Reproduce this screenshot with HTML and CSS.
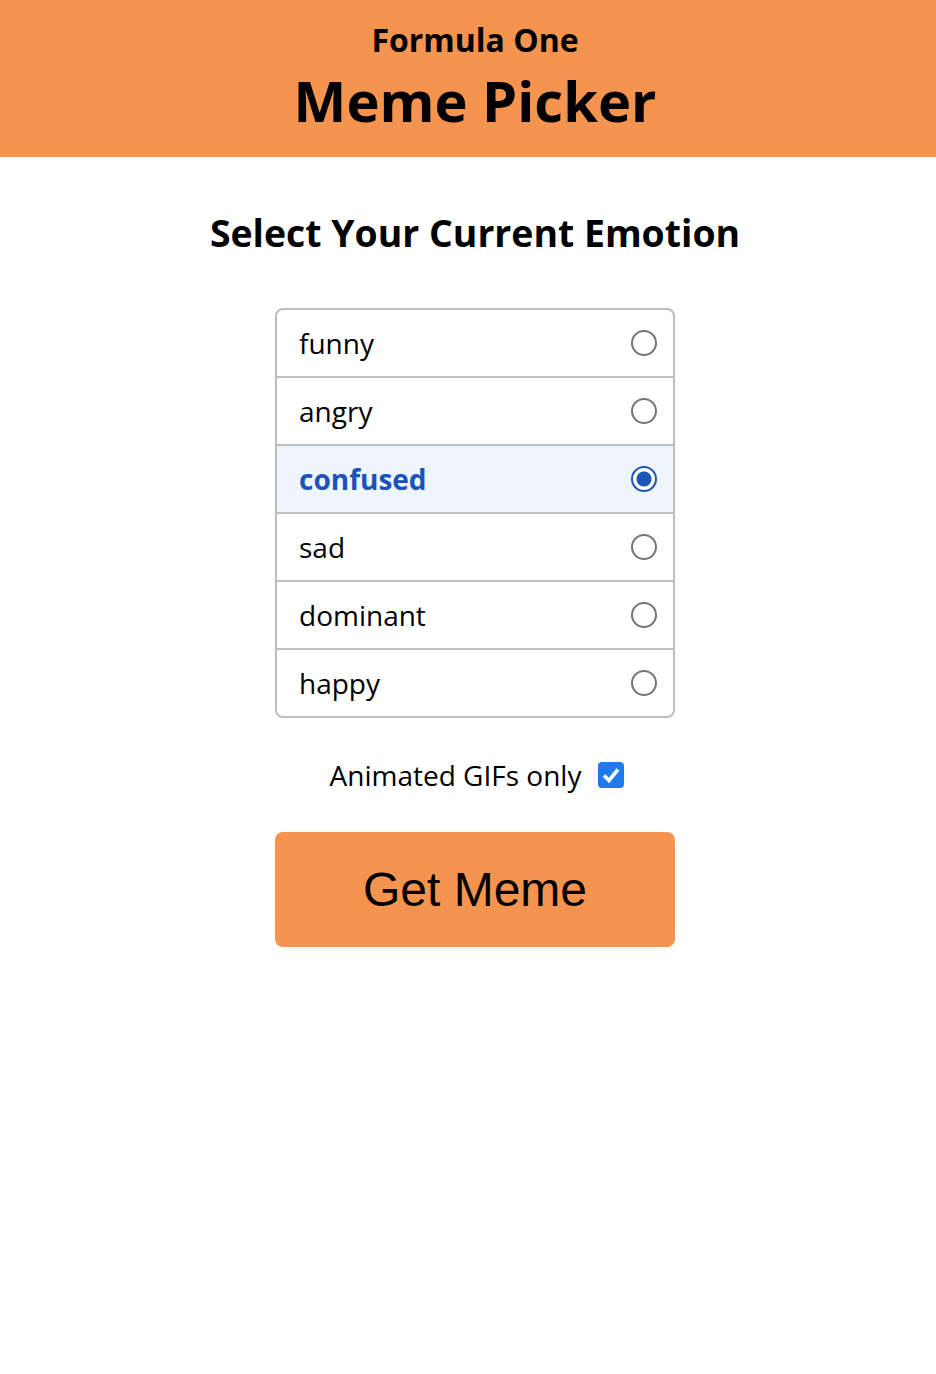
FILE: index.html
```html
<!DOCTYPE html>
<html lang="en">
<head>
<meta charset="utf-8">
<title>Meme Picker</title>
<link rel="stylesheet" href="styles.css">
</head>
<body>
<header class="header">
  <h3 class="header-sub">Formula One</h3>
  <h1 class="header-title">Meme Picker</h1>
</header>
<main class="main">
  <h2 class="prompt">Select Your Current Emotion</h2>
  <div class="emotions">
    <label class="emotion"><span>funny</span><input type="radio" name="emotion" value="funny"></label>
    <label class="emotion"><span>angry</span><input type="radio" name="emotion" value="angry"></label>
    <label class="emotion emotion-selected"><span>confused</span><input type="radio" name="emotion" value="confused" checked></label>
    <label class="emotion"><span>sad</span><input type="radio" name="emotion" value="sad"></label>
    <label class="emotion"><span>dominant</span><input type="radio" name="emotion" value="dominant"></label>
    <label class="emotion"><span>happy</span><input type="radio" name="emotion" value="happy"></label>
  </div>
  <label class="gif-option"><span>Animated GIFs only</span><input type="checkbox" class="gif-check" checked></label>
  <button class="get-btn">Get Meme</button>
</main>
</body>
</html>
```
FILE: styles.css
```css
* { box-sizing: border-box; }
body {
  margin: 0;
  font-family: "Open Sans", "Noto Sans", sans-serif;
  color: #000;
  background: #fff;
}
.header {
  background: #f4944e;
  height: 157px;
  display: flex;
  flex-direction: column;
  align-items: center;
  padding: 18px 0 0 14px;
}
.header-sub {
  margin: 0;
  font-size: 32px;
  font-weight: 700;
  line-height: 44px;
}
.header-title {
  margin: 0;
  font-size: 56px;
  font-weight: 700;
  line-height: 76px;
}
.main {
  display: flex;
  flex-direction: column;
  align-items: center;
  padding-left: 14px;
}
.prompt {
  margin: 50px 0 49px;
  font-size: 37.4px;
  font-weight: 700;
  line-height: 52px;
}
.emotions {
  width: 400px;
  border: 2px solid #bdbdbd;
  border-radius: 8px;
  overflow: hidden;
}
.emotion {
  display: flex;
  align-items: center;
  justify-content: space-between;
  height: 68px;
  padding: 0 16px 0 22px;
  font-size: 28px;
  border-bottom: 2px solid #bdbdbd;
}
.emotion:last-child { border-bottom: none; height: 66px; }
.emotion-selected {
  background: #eef5fd;
  color: #1d52b8;
  font-weight: 700;
}
.emotion input {
  appearance: none;
  -webkit-appearance: none;
  margin: 0;
  width: 26px;
  height: 26px;
  border: 2px solid #767676;
  border-radius: 50%;
  background: #fff;
}
.emotion input:checked {
  border-color: #1e55b8;
  background: radial-gradient(circle, #1e55b8 0 7px, #fff 8px);
}
.gif-option {
  display: flex;
  align-items: center;
  gap: 17px;
  margin-top: 38px;
  padding-left: 4px;
  font-size: 28px;
}
.gif-check {
  appearance: none;
  -webkit-appearance: none;
  flex: none;
  margin: 0;
  width: 26px;
  height: 26px;
  border-radius: 4px;
  background: #1f7aec url("data:image/svg+xml,%3Csvg xmlns='http://www.w3.org/2000/svg' viewBox='0 0 26 26'%3E%3Cpath d='M6 13.5l5 5 9-11' fill='none' stroke='%23fff' stroke-width='3.6'/%3E%3C/svg%3E") center/26px 26px no-repeat;
}
.get-btn {
  margin-top: 38px;
  width: 400px;
  height: 115px;
  border: none;
  border-radius: 8px;
  background: #f4944e;
  font-family: "Liberation Sans", Arial, sans-serif;
  font-size: 48px;
  color: #000;
}
```
